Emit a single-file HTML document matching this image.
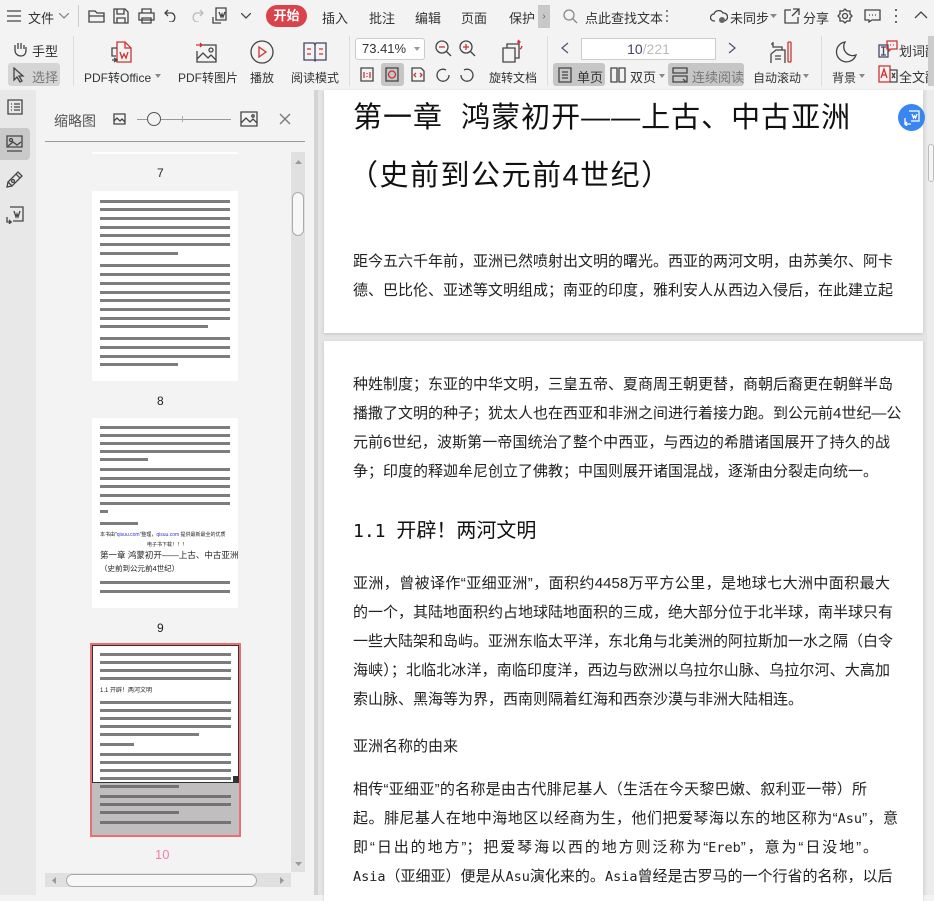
<!DOCTYPE html>
<html><head><meta charset="utf-8">
<style>
*{margin:0;padding:0;box-sizing:border-box}
body{width:934px;height:895px;overflow:hidden;background:#f3f3f3;font-family:"Liberation Sans","Noto Sans CJK SC",sans-serif;color:#333;position:relative}
.a{position:absolute}
.t{font-size:12px;color:#333;white-space:nowrap}
svg{position:absolute;fill:none;stroke:#444;stroke-width:1.3}
.th{position:absolute;background:#fff}
.ln{position:absolute;left:8px;right:8px;height:3px;background:#666;opacity:.85}
.doc div.l{height:29px;line-height:29px;font-size:15px;color:#222;white-space:nowrap;text-align:justify;text-align-last:justify;width:537px}
.doc div.e{text-align-last:left}
.m{font-family:'DejaVu Sans Mono',monospace;font-size:13.5px}
</style></head><body>
<!-- top menu row -->
<div class="a" style="left:0;top:0;width:934px;height:33px;background:#f3f3f3"></div>
<svg style="left:7px;top:10px" width="14" height="12"><path d="M0 1h14M0 6h14M0 11h14"/></svg>
<div class="a t" style="left:28px;top:8px;font-size:13px">文件</div>
<svg style="left:59px;top:13px" width="10" height="6"><path d="M0 0l5 5 5-5" stroke="#888"/></svg>
<div class="a" style="left:78px;top:5px;width:1px;height:22px;background:#ccc"></div>
<svg style="left:88px;top:8px" width="18" height="16"><path d="M1 3h6l2 2h7v9H1zM1 8h15"/></svg>
<svg style="left:113px;top:8px" width="16" height="16"><path d="M1 1h11l3 3v11H1zM4 1v5h7V1M4 15v-5h8v5"/></svg>
<svg style="left:138px;top:8px" width="17" height="16"><path d="M4 5V1h9v4M1 5h15v7H1zM4 10h9v5H4z"/></svg>
<svg style="left:164px;top:9px" width="14" height="13"><path d="M4 1L1 4l3 3M1 4h7a5 5 0 010 9H5"/></svg>
<svg style="left:190px;top:9px" width="14" height="13"><path d="M10 1l3 3-3 3M13 4H6a5 5 0 000 9h3" stroke="#bbb"/></svg>
<svg style="left:212px;top:7px" width="18" height="18"><path d="M4 1h10v12H4zM1 10v6h8M7 5l2 5 1-3 1 3 2-5" /></svg>
<svg style="left:241px;top:13px" width="10" height="6"><path d="M0 0l5 5 5-5"/></svg>
<div class="a" style="left:266px;top:5px;width:41px;height:22px;background:#d9434a;border-radius:11px;color:#fff;font-size:13px;font-weight:bold;text-align:center;line-height:22px">开始</div>
<div class="a t" style="left:322px;top:8px;font-size:13px">插入</div>
<div class="a t" style="left:369px;top:8px;font-size:13px">批注</div>
<div class="a t" style="left:415px;top:8px;font-size:13px">编辑</div>
<div class="a t" style="left:461px;top:8px;font-size:13px">页面</div>
<div class="a t" style="left:509px;top:8px;font-size:13px">保护</div>
<div class="a" style="left:538px;top:5px;width:12px;height:23px;background:#c8c8c8;color:#666;font-size:10px;text-align:center;line-height:23px">›</div>
<svg style="left:563px;top:9px" width="15" height="15"><circle cx="6" cy="6" r="5" stroke="#888"/><path d="M10 10l4 4" stroke="#888"/></svg>
<div class="a t" style="left:585px;top:8px;font-size:13px">点此查找文本</div>
<div class="a" style="left:666px;top:10px;width:2px;height:14px;background:repeating-linear-gradient(#888 0 2px,transparent 2px 5px)"></div>
<svg style="left:710px;top:8px" width="18" height="16"><path d="M5 13H4a3 3 0 010-7 5 5 0 019-1 4 4 0 011 8"/><circle cx="12" cy="12" r="3" fill="#666" stroke="none"/></svg>
<div class="a t" style="left:730px;top:8px;font-size:13px">未同步</div>
<svg style="left:770px;top:14px" width="7" height="4"><path d="M0 0h7L3.5 4z" fill="#888" stroke="none"/></svg>
<svg style="left:784px;top:8px" width="16" height="16"><path d="M7 2H1v13h13V9M9 1h6v6M15 1L8 8"/></svg>
<div class="a t" style="left:803px;top:8px;font-size:13px">分享</div>
<svg style="left:837px;top:8px" width="16" height="16"><circle cx="8" cy="8" r="2.5"/><path d="M8 1l2 2 3 0 0 3 2 2-2 2 0 3-3 0-2 2-2-2-3 0 0-3-2-2 2-2 0-3 3 0z"/></svg>
<svg style="left:864px;top:9px" width="17" height="14"><path d="M1 1h15v10H8l-3 2v-2H1z"/><path d="M5 6h1M8 6h1M11 6h1"/></svg>
<div class="a" style="left:895px;top:9px;width:2px;height:14px;background:repeating-linear-gradient(#666 0 2px,transparent 2px 6px)"></div>
<svg style="left:914px;top:11px" width="14" height="8"><path d="M1 7l6-6 6 6"/></svg>

<!-- toolbar row -->
<svg style="left:12px;top:41px" width="16" height="16"><path d="M3 9V4M6 8V2M9 8V2M12 8V4M3 9c0 4 3 6 6 6s5-2 5-6V6"/></svg>
<div class="a t" style="left:32px;top:41px;font-size:13px">手型</div>
<div class="a" style="left:8px;top:63px;width:52px;height:23px;background:#d5d5d5;border-radius:3px"></div>
<svg style="left:13px;top:67px" width="12" height="16"><path d="M1 1v12l3-3 3 5 2-1-3-5h4z"/></svg>
<div class="a t" style="left:32px;top:67px;font-size:13px;color:#777">选择</div>
<div class="a" style="left:73px;top:36px;width:1px;height:50px;background:#ddd"></div>
<svg style="left:109px;top:40px" width="26" height="24"><path d="M8 2h8l6 6v14H8zM16 2v6h6" stroke="#c33"/><path d="M11 12l2 6 2-4 2 4 2-6" stroke="#c33"/><path d="M8 8H3v8h4M3 20h5M5 18l3 2-3 2"/></svg>
<div class="a t" style="left:84px;top:69px">PDF转Office</div>
<svg style="left:155px;top:74px" width="6" height="4"><path d="M0 0h6L3 4z" fill="#888" stroke="none"/></svg>
<svg style="left:196px;top:41px" width="22" height="22"><path d="M4 4h16v17H1V10"/><circle cx="15" cy="9" r="2"/><path d="M1 18l6-6 5 5 3-3 5 5"/><path d="M0 4h6M4 2l2 2-2 2" stroke="#c33"/></svg>
<div class="a t" style="left:178px;top:69px">PDF转图片</div>
<svg style="left:250px;top:40px" width="24" height="24"><circle cx="12" cy="12" r="11"/><path d="M9 7l7 5-7 5z" stroke="#c33"/></svg>
<div class="a t" style="left:250px;top:69px">播放</div>
<svg style="left:303px;top:42px" width="24" height="20"><path d="M1 1h10l1 2 1-2h10v17H13l-1 1-1-1H1zM12 3v15" stroke="#446"/><path d="M4 7h4M4 12h4M16 7h4M16 12h4" stroke="#c33"/></svg>
<div class="a t" style="left:291px;top:69px">阅读模式</div>
<div class="a" style="left:349px;top:36px;width:1px;height:50px;background:#ddd"></div>
<div class="a" style="left:355px;top:38px;width:70px;height:22px;background:#fff;border:1px solid #ccc;border-radius:3px;font-size:13px;line-height:20px;padding-left:6px">73.41%</div>
<svg style="left:414px;top:47px" width="6" height="4"><path d="M0 0h6L3 4z" fill="#999" stroke="none"/></svg>
<svg style="left:435px;top:40px" width="18" height="18"><circle cx="7" cy="7" r="6"/><path d="M4 7h6" stroke="#c33"/><path d="M11 11l5 5"/></svg>
<svg style="left:459px;top:40px" width="18" height="18"><circle cx="7" cy="7" r="6"/><path d="M4 7h6M7 4v6" stroke="#c33"/><path d="M11 11l5 5"/></svg>
<svg style="left:360px;top:67px" width="14" height="15"><path d="M1 1h12v13H1z"/><path d="M4 5v6M10 5v6M7 6v1M7 9v1" stroke="#c33"/></svg>
<div class="a" style="left:381px;top:63px;width:23px;height:23px;background:#c6c6c6;border-radius:3px"></div>
<svg style="left:385px;top:67px" width="14" height="15"><path d="M1 1h12v13H1z"/><circle cx="7" cy="7.5" r="3.5" stroke="#c33"/></svg>
<svg style="left:411px;top:67px" width="14" height="15"><path d="M1 1h9l3 3v10H1z"/><path d="M5 6L3 8l2 2M9 6l2 2-2 2" stroke="#c33"/></svg>
<svg style="left:435px;top:67px" width="16" height="16"><path d="M14 8a6 6 0 11-3-5"/></svg>
<svg style="left:459px;top:67px" width="16" height="16"><path d="M2 8a6 6 0 103-5"/></svg>
<svg style="left:500px;top:39px" width="26" height="26"><path d="M3 9h12v14H3zM7 9V5h12v14h-4" /><path d="M18 1l2 2-2 2M20 3h-3M22 7a4 4 0 01-2 3" stroke="#c33"/></svg>
<div class="a t" style="left:489px;top:69px">旋转文档</div>
<div class="a" style="left:547px;top:36px;width:1px;height:50px;background:#ddd"></div>
<svg style="left:561px;top:42px" width="8" height="12"><path d="M7 1L1 6l6 5" stroke="#557"/></svg>
<div class="a" style="left:581px;top:38px;width:135px;height:22px;background:#fff;border:1px solid #ccc;text-align:center;font-size:14px;line-height:20px;color:#446"><span>10</span><span style="color:#bbb">/221</span></div>
<svg style="left:728px;top:42px" width="8" height="12"><path d="M1 1l6 5-6 5" stroke="#557"/></svg>
<div class="a" style="left:553px;top:63px;width:52px;height:23px;background:#c6c6c6;border-radius:3px"></div>
<svg style="left:558px;top:67px" width="14" height="16"><path d="M1 1h12v14H1zM4 5h6M4 8h6M4 11h6"/></svg>
<div class="a t" style="left:577px;top:67px;font-size:13px">单页</div>
<svg style="left:610px;top:67px" width="16" height="16"><path d="M1 1h6v14H1zM9 1h6v14H9z"/></svg>
<div class="a t" style="left:630px;top:67px;font-size:13px">双页</div>
<svg style="left:659px;top:74px" width="6" height="4"><path d="M0 0h6L3 4z" fill="#888" stroke="none"/></svg>
<div class="a" style="left:668px;top:63px;width:76px;height:23px;background:#c6c6c6;border-radius:3px"></div>
<svg style="left:672px;top:67px" width="16" height="16"><path d="M1 1h14v5H1zM1 9h14v6H1z"/><path d="M11 12l3 3" /></svg>
<div class="a t" style="left:692px;top:67px;font-size:13px;color:#777">连续阅读</div>
<svg style="left:770px;top:41px" width="22" height="22"><path d="M1 3h2v3h9v3M3 1v2M1 22V13l5-4h9v13"/><path d="M5 15h6M5 18h6"/><rect x="18" y="1" width="3" height="20" rx="1" stroke="#c33"/></svg>
<div class="a t" style="left:753px;top:69px">自动滚动</div>
<svg style="left:803px;top:74px" width="6" height="4"><path d="M0 0h6L3 4z" fill="#888" stroke="none"/></svg>
<div class="a" style="left:821px;top:36px;width:1px;height:50px;background:#ddd"></div>
<svg style="left:835px;top:40px" width="24" height="24"><path d="M10 2a10 10 0 1011 13A9 9 0 0110 2z"/></svg>
<div class="a t" style="left:832px;top:69px">背景</div>
<svg style="left:859px;top:74px" width="6" height="4"><path d="M0 0h6L3 4z" fill="#888" stroke="none"/></svg>
<svg style="left:878px;top:40px" width="20" height="18"><path d="M1 5h9v12H1zM3 7h5M5.5 7v8M3 15h5" stroke="#446"/><path d="M9 1h10v8h-6l-2 2V9H9z" stroke="#c33"/><path d="M12 5h1M15 5h1" stroke="#c33"/></svg>
<div class="a t" style="left:899px;top:41px;font-size:13px">划词翻</div>
<svg style="left:878px;top:65px" width="20" height="18"><path d="M1 1h11v16H1z" stroke="#c33"/><path d="M3 13l3-9 3 9M4 10h4" stroke="#c33"/><path d="M12 5h7v12h-7M14 8l3 5M17 8l-3 5"/></svg>
<div class="a t" style="left:899px;top:67px;font-size:13px">全文翻</div>
<div class="a" style="left:928px;top:36px;width:6px;height:50px;background:#ccc"></div>

<!-- left icon bar -->
<div class="a" style="left:0;top:90px;width:36px;height:805px;background:#e8e8e8"></div>
<svg style="left:7px;top:99px" width="16" height="16"><path d="M1 1h14v14H1zM4 5h1M7 5h6M4 8h1M7 8h6M4 11h1M7 11h6"/></svg>
<div class="a" style="left:0;top:128px;width:30px;height:32px;background:#c9c9c9;border-radius:0 4px 4px 0"></div>
<svg style="left:6px;top:135px" width="18" height="18"><path d="M1 1h15v11H1zM1 16h15"/><circle cx="5" cy="5" r="1.5"/><path d="M2 11l5-4 4 3 4-3"/></svg>
<svg style="left:6px;top:170px" width="18" height="18"><path d="M6 16L2 12l8-8 4 4zM10 4l2-2 4 4-2 2M2 12l-1 5 5-1"/><circle cx="7" cy="11" r="1.5"/></svg>
<svg style="left:6px;top:206px" width="18" height="18"><path d="M4 1h13v14H7M1 11v5h5M3 14l2 2-2 2"/><path d="M8 5l2 6 1-3 1 3 2-6"/></svg>

<!-- thumbnail panel -->
<div class="a" style="left:36px;top:90px;width:278px;height:805px;background:#f3f3f3"></div>
<div class="a t" style="left:54px;top:111px;font-size:14px;color:#555">缩略图</div>
<svg style="left:113px;top:113px" width="13" height="12"><path d="M1 1h11v10H1zM1 8l3-3 3 3 2-2 3 3"/></svg>
<div class="a" style="left:137px;top:119px;width:94px;height:1px;background:#999"></div>
<div class="a" style="left:147px;top:112px;width:14px;height:14px;border:1.3px solid #555;border-radius:50%;background:#f3f3f3"></div>
<div class="a" style="left:182px;top:116px;width:1px;height:6px;background:#aaa"></div>
<svg style="left:240px;top:111px" width="18" height="16"><path d="M1 1h16v14H1zM1 12l5-5 4 4 3-3 4 4"/><circle cx="13" cy="5" r="1.2"/></svg>
<svg style="left:279px;top:113px" width="12" height="12"><path d="M1 1l10 10M11 1L1 11" stroke="#777"/></svg>
<div class="a" style="left:45px;top:141px;width:260px;height:1px;background:#999"></div>
<div class="a" style="left:291px;top:152px;width:14px;height:720px;background:#e0e0e0"></div>
<svg style="left:295px;top:160px" width="7" height="4"><path d="M0 4h7L3.5 0z" fill="#999" stroke="none"/></svg>
<div class="a" style="left:292px;top:192px;width:12px;height:44px;background:#f7f7f7;border:1px solid #aaa;border-radius:6px"></div>
<svg style="left:295px;top:862px" width="7" height="4"><path d="M0 0h7L3.5 4z" fill="#999" stroke="none"/></svg>
<div class="a" style="left:45px;top:873px;width:246px;height:14px;background:#e0e0e0"></div>
<div class="a" style="left:66px;top:874px;width:191px;height:13px;background:#f7f7f7;border:1px solid #aaa;border-radius:7px"></div>
<svg style="left:52px;top:877px" width="4" height="7"><path d="M4 0v7L0 3.5z" fill="#999" stroke="none"/></svg>
<svg style="left:280px;top:877px" width="4" height="7"><path d="M0 0v7L4 3.5z" fill="#999" stroke="none"/></svg>

<div class="th" style="left:92px;top:152px;width:146px;height:2px"></div>
<div class="a t" style="left:157px;top:166px;font-size:12px;color:#222">7</div>
<div class="th" style="left:92px;top:191px;width:146px;height:190px">
<div class="ln" style="top:9px"></div><div class="ln" style="top:17px"></div><div class="ln" style="top:26px"></div><div class="ln" style="top:35px"></div><div class="ln" style="top:43px"></div><div class="ln" style="top:52px"></div><div class="ln" style="top:61px;right:60px"></div>
<div class="ln" style="top:73px"></div><div class="ln" style="top:82px"></div><div class="ln" style="top:91px"></div><div class="ln" style="top:100px"></div><div class="ln" style="top:108px"></div><div class="ln" style="top:117px"></div><div class="ln" style="top:126px"></div><div class="ln" style="top:134px;right:30px"></div>
<div class="ln" style="top:146px"></div><div class="ln" style="top:155px"></div><div class="ln" style="top:164px"></div><div class="ln" style="top:172px;right:60px"></div>
</div>
<div class="a t" style="left:157px;top:394px;font-size:12px;color:#222">8</div>
<div class="th" style="left:92px;top:418px;width:146px;height:190px">
<div class="ln" style="top:8px"></div><div class="ln" style="top:16px"></div><div class="ln" style="top:24px"></div><div class="ln" style="top:32px"></div><div class="ln" style="top:40px;right:90px"></div>
<div class="ln" style="top:50px"></div><div class="ln" style="top:59px"></div><div class="ln" style="top:67px"></div><div class="ln" style="top:76px"></div><div class="ln" style="top:84px"></div><div class="ln" style="top:92px;right:130px"></div>
<div class="ln" style="top:104px;right:100px"></div>
<div class="a" style="left:8px;top:113px;font-size:5px;color:#222;white-space:nowrap">本书由"<span style="color:#33c">qisuu.com</span>"整理，<span style="color:#33c">qisuu.com</span> 提供最新最全的优质</div>
<div class="a" style="left:55px;top:123px;font-size:5px;color:#222;white-space:nowrap">电子书下载！！！</div>
<div class="a" style="left:8px;top:131px;font-size:8.5px;color:#222;white-space:nowrap">第一章  鸿蒙初开——上古、中古亚洲</div>
<div class="a" style="left:8px;top:145px;font-size:7.5px;color:#222;white-space:nowrap">（史前到公元前4世纪）</div>
<div class="ln" style="top:163px"></div><div class="ln" style="top:172px"></div>
</div>
<div class="a t" style="left:157px;top:621px;font-size:12px;color:#222">9</div>
<div class="a" style="left:90px;top:643px;width:151px;height:194px;border:2px solid #e87070;background:#fff">
<div class="a" style="left:0;top:137px;width:147px;height:53px;background:#c1bebf"></div>
<div class="a" style="left:0;top:0;width:147px;height:138px;border:1.5px solid #333"></div>
<div class="a" style="right:0;top:131px;width:6px;height:6px;background:#333"></div>
<div class="ln" style="top:8px"></div><div class="ln" style="top:16px"></div><div class="ln" style="top:24px"></div><div class="ln" style="top:32px"></div>
<div class="a" style="left:8px;top:40px;font-size:6px;color:#222;white-space:nowrap">1.1 开辟！两河文明</div>
<div class="ln" style="top:56px"></div><div class="ln" style="top:64px"></div><div class="ln" style="top:72px"></div><div class="ln" style="top:80px"></div><div class="ln" style="top:88px;right:40px"></div>
<div class="ln" style="top:98px;right:105px"></div>
<div class="ln" style="top:108px"></div><div class="ln" style="top:116px"></div><div class="ln" style="top:124px"></div><div class="ln" style="top:132px"></div><div class="ln" style="top:140px;right:60px"></div>
<div class="ln" style="top:150px"></div><div class="ln" style="top:158px"></div><div class="ln" style="top:166px;right:60px"></div>
<div class="ln" style="top:176px"></div>
</div>
<div class="a t" style="left:155px;top:847px;font-size:13px;color:#f07fb0">10</div>

<!-- main area -->
<div class="a" style="left:314px;top:90px;width:620px;height:805px;background:#e4e4e4"></div>
<div class="a" style="left:314px;top:90px;width:4px;height:805px;background:#d4d4d4"></div>
<div class="a" style="left:927px;top:90px;width:7px;height:805px;background:#ececec"></div>
<div class="a" style="left:928px;top:144px;width:6px;height:38px;background:#f5f5f5;border:1px solid #bbb;border-radius:3px"></div>
<!-- page 1 -->
<div class="a doc" style="left:324px;top:90px;width:599px;height:243px;background:#fff;box-shadow:0 1px 3px rgba(0,0,0,.15)">
<div class="a" style="left:29px;top:4px;font-size:29px;color:#111;white-space:nowrap;letter-spacing:1px">第一章&nbsp;&nbsp;鸿蒙初开——上古、中古亚洲</div>
<div class="a" style="left:25px;top:62px;font-size:29px;color:#111;white-space:nowrap;letter-spacing:1.5px">（史前到公元前4世纪）</div>
<div class="a" style="left:29px;top:157px">
<div class="l">距今五六千年前，亚洲已然喷射出文明的曙光。西亚的两河文明，由苏美尔、阿卡</div>
<div class="l">德、巴比伦、亚述等文明组成；南亚的印度，雅利安人从西边入侵后，在此建立起</div>
</div>
</div>
<div class="a" style="left:898px;top:104px;width:27px;height:27px;border-radius:50%;background:#3a86f0"></div>
<svg style="left:904px;top:110px" width="16" height="16"><path d="M5 1h10v10H7M1 8v6h6M3 12l-2 2 2 2M8 4l1.5 4 1-2 1 2L13 4" stroke="#fff"/></svg>
<!-- page 2 -->
<div class="a doc" style="left:324px;top:341px;width:599px;height:560px;background:#fff;box-shadow:0 1px 3px rgba(0,0,0,.15)">
<div class="a" style="left:29px;top:29px">
<div class="l">种姓制度；东亚的中华文明，三皇五帝、夏商周王朝更替，商朝后裔更在朝鲜半岛</div>
<div class="l">播撒了文明的种子；犹太人也在西亚和非洲之间进行着接力跑。到公元前4世纪—公</div>
<div class="l">元前6世纪，波斯第一帝国统治了整个中西亚，与西边的希腊诸国展开了持久的战</div>
<div class="l e">争；印度的释迦牟尼创立了佛教；中国则展开诸国混战，逐渐由分裂走向统一。</div>
</div>
<div class="a" style="left:29px;top:173px;font-size:20px;color:#111;white-space:nowrap"><span style="font-family:'DejaVu Sans Mono',monospace;font-size:18px">1.1 </span> 开辟！两河文明</div>
<div class="a" style="left:29px;top:228px">
<div class="l">亚洲，曾被译作“亚细亚洲”，面积约4458万平方公里，是地球七大洲中面积最大</div>
<div class="l">的一个，其陆地面积约占地球陆地面积的三成，绝大部分位于北半球，南半球只有</div>
<div class="l">一些大陆架和岛屿。亚洲东临太平洋，东北角与北美洲的阿拉斯加一水之隔（白令</div>
<div class="l">海峡）；北临北冰洋，南临印度洋，西边与欧洲以乌拉尔山脉、乌拉尔河、大高加</div>
<div class="l e">索山脉、黑海等为界，西南则隔着红海和西奈沙漠与非洲大陆相连。</div>
</div>
<div class="a" style="left:29px;top:391px"><div class="l e">亚洲名称的由来</div></div>
<div class="a" style="left:29px;top:434px">
<div class="l" style="width:514px">相传“亚细亚”的名称是由古代腓尼基人（生活在今天黎巴嫩、叙利亚一带）所</div>
<div class="l" style="width:545px">起。腓尼基人在地中海地区以经商为生，他们把爱琴海以东的地区称为“<span class="m">Asu</span>”，意</div>
<div class="l" style="width:525px">即“日出的地方”；把爱琴海以西的地方则泛称为“<span class="m">Ereb</span>”，意为“日没地”。</div>
<div class="l"><span class="m">Asia</span>（亚细亚）便是从<span class="m">Asu</span>演化来的。<span class="m">Asia</span>曾经是古罗马的一个行省的名称，以后</div>
</div>
</div>
</body></html>
